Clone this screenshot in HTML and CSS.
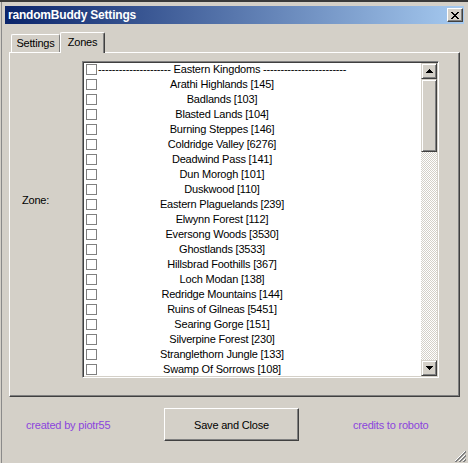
FILE: index.html
```html
<!DOCTYPE html>
<html>
<head>
<meta charset="utf-8">
<title>randomBuddy Settings</title>
<link rel="stylesheet" href="styles.css">
</head>
<body>
<div class="window">
  <div class="titlebar">
    <span class="title">randomBuddy Settings</span>
    <span class="close"><svg width="8" height="7" viewBox="0 0 8 7" shape-rendering="crispEdges"><path d="M0 0h2v1h1v1h2v-1h1v-1h2v1h-1v1h-1v1h-1v1h1v1h1v1h1v1h-2v-1h-1v-1h-2v1h-1v1h-2v-1h1v-1h1v-1h1v-1h-1v-1h-1v-1h-1z" fill="#000"/></svg></span>
  </div>
  <div class="tabs">
    <div class="tab">Settings</div>
    <div class="tab tab-active">Zones</div>
  </div>
  <div class="panel">
    <div class="zone-label">Zone:</div>
    <div class="listbox">
      <div class="items">
        <div class="row"><span class="cb"></span><span class="text">--------------------- Eastern Kingdoms ------------------------</span></div>
        <div class="row"><span class="cb"></span><span class="text">Arathi Highlands [145]</span></div>
        <div class="row"><span class="cb"></span><span class="text">Badlands [103]</span></div>
        <div class="row"><span class="cb"></span><span class="text">Blasted Lands [104]</span></div>
        <div class="row"><span class="cb"></span><span class="text">Burning Steppes [146]</span></div>
        <div class="row"><span class="cb"></span><span class="text">Coldridge Valley [6276]</span></div>
        <div class="row"><span class="cb"></span><span class="text">Deadwind Pass [141]</span></div>
        <div class="row"><span class="cb"></span><span class="text">Dun Morogh [101]</span></div>
        <div class="row"><span class="cb"></span><span class="text">Duskwood [110]</span></div>
        <div class="row"><span class="cb"></span><span class="text">Eastern Plaguelands [239]</span></div>
        <div class="row"><span class="cb"></span><span class="text">Elwynn Forest [112]</span></div>
        <div class="row"><span class="cb"></span><span class="text">Eversong Woods [3530]</span></div>
        <div class="row"><span class="cb"></span><span class="text">Ghostlands [3533]</span></div>
        <div class="row"><span class="cb"></span><span class="text">Hillsbrad Foothills [367]</span></div>
        <div class="row"><span class="cb"></span><span class="text">Loch Modan [138]</span></div>
        <div class="row"><span class="cb"></span><span class="text">Redridge Mountains [144]</span></div>
        <div class="row"><span class="cb"></span><span class="text">Ruins of Gilneas [5451]</span></div>
        <div class="row"><span class="cb"></span><span class="text">Searing Gorge [151]</span></div>
        <div class="row"><span class="cb"></span><span class="text">Silverpine Forest [230]</span></div>
        <div class="row"><span class="cb"></span><span class="text">Stranglethorn Jungle [133]</span></div>
        <div class="row"><span class="cb"></span><span class="text">Swamp Of Sorrows [108]</span></div>
      </div>
      <div class="scrollbar">
        <div class="sbtn"><svg width="7" height="4" viewBox="0 0 7 4" shape-rendering="crispEdges"><path d="M3 0h1v1h1v1h1v1h1v1H0v-1h1v-1h1v-1h1z" fill="#000"/></svg></div>
        <div class="thumb"></div>
        <div class="track"></div>
        <div class="sbtn"><svg width="7" height="4" viewBox="0 0 7 4" shape-rendering="crispEdges"><path d="M0 0h7v1h-1v1h-1v1h-1v1h-1v-1h-1v-1h-1v-1H0z" fill="#000"/></svg></div>
      </div>
    </div>
  </div>
  <div class="footer">
    <span class="credit">created by piotr55</span>
    <button class="btn">Save and Close</button>
    <span class="credit credit-right">credits to roboto</span>
  </div>
  <svg class="grip" width="12" height="12" viewBox="0 0 12 12" shape-rendering="crispEdges">
    <path d="M11 1L1 11M11 5L5 11M11 9L9 11" stroke="#fff" stroke-width="1" fill="none"/>
    <path d="M12 1L1 12M12 2L2 12M12 5L5 12M12 6L6 12M12 9L9 12M12 10L10 12" stroke="#808080" stroke-width="1" fill="none"/>
  </svg>
</div>
</body>
</html>
```
FILE: styles.css
```css
* { box-sizing: border-box; }
html, body { margin: 0; padding: 0; }
body {
  width: 468px;
  height: 463px;
  overflow: hidden;
  background: #3a3a3a;
  font-family: "Liberation Sans", Arial, sans-serif;
  font-size: 11px;
  letter-spacing: -0.2px;
  color: #000;
}
.window {
  position: relative;
  margin-top: 2px;
  height: 461px;
  background: #d4d0c8;
  padding: 4px 0 0 5px;
  box-shadow: inset 1px 0 #d4d0c8, inset 2px 0 #8a8a8a;
}
.titlebar {
  width: 459px;
  height: 18px;
  background: linear-gradient(to right, #0a246a, #a6caf0);
  display: flex;
  align-items: center;
  justify-content: space-between;
  padding: 0 1px 0 3px;
}
.title {
  color: #fff;
  font-weight: bold;
  font-size: 12px;
  letter-spacing: -0.2px;
}
.close {
  width: 16px;
  height: 14px;
  background: #d4d0c8;
  border: 1px solid;
  border-color: #fff #404040 #404040 #fff;
  box-shadow: inset -1px -1px #808080;
  display: flex;
  align-items: center;
  justify-content: center;
}
.tabs {
  position: relative;
  z-index: 1;
  display: flex;
  align-items: flex-end;
  height: 20px;
  margin-top: 8px;
  padding-left: 6px;
}
.tab {
  width: 49px;
  height: 18px;
  background: #d4d0c8;
  border: 1px solid;
  border-bottom: none;
  border-color: #fff #808080 #fff #fff;
  border-radius: 2px 2px 0 0;
  display: flex;
  align-items: center;
  justify-content: center;
  padding-bottom: 1px;
}
.tab-active {
  width: 45px;
  height: 21px;
  margin-bottom: -1px;
  border-color: #fff #404040 #fff #fff;
  box-shadow: inset -1px 0 #808080;
  padding-bottom: 3px;
}
.panel {
  width: 451px;
  height: 345px;
  margin-left: 4px;
  border: 1px solid;
  border-color: #fff #404040 #404040 #fff;
  box-shadow: inset -1px -1px #808080;
  display: flex;
  align-items: flex-start;
  padding: 8px 0 0 12px;
}
.zone-label {
  width: 60px;
  flex: none;
  line-height: 13px;
  margin-top: 133px;
}
.listbox {
  width: 357px;
  height: 317px;
  flex: none;
  background: #fff;
  border: 1px solid;
  border-color: #808080 #fff #fff #808080;
  box-shadow: inset 1px 1px #404040, inset -1px -1px #d4d0c8;
  padding: 1px;
  display: flex;
  overflow: hidden;
}
.items {
  flex: 1;
  overflow: hidden;
  margin-top: -1px;
}
.row {
  height: 15px;
  display: flex;
  align-items: center;
}
.cb {
  width: 11px;
  height: 11px;
  flex: none;
  margin-left: 2px;
  border: 1px solid #808080;
  background: #fff;
}
.text {
  width: 248px;
  flex: none;
  margin-left: 1px;
  text-align: center;
  white-space: nowrap;
  line-height: 15px;
}
.scrollbar {
  width: 16px;
  flex: none;
  display: flex;
  flex-direction: column;
  background: repeating-conic-gradient(#fff 0 25%, #d4d0c8 0 50%) 0 0 / 2px 2px;
}
.sbtn, .thumb {
  width: 16px;
  background: #d4d0c8;
  border: 1px solid;
  border-color: #d4d0c8 #404040 #404040 #d4d0c8;
  box-shadow: inset 1px 1px #fff, inset -1px -1px #808080;
}
.sbtn {
  height: 16px;
  display: flex;
  align-items: center;
  justify-content: center;
}
.thumb { height: 73px; }
.track { flex: 1; }
.footer {
  display: flex;
  align-items: center;
  margin-top: 11px;
  padding-left: 21px;
}
.credit {
  width: 138px;
  color: #8b45dd;
}
.credit-right {
  width: auto;
  margin-left: 54px;
}
.btn {
  width: 135px;
  height: 33px;
  background: #d4d0c8;
  border: 1px solid;
  border-color: #fff #404040 #404040 #fff;
  box-shadow: inset -1px -1px #808080;
  font-family: "Liberation Sans", Arial, sans-serif;
  font-size: 11px;
  letter-spacing: -0.2px;
  color: #000;
  padding: 0;
}
.grip {
  position: absolute;
  right: 2px;
  bottom: 1px;
}
```
